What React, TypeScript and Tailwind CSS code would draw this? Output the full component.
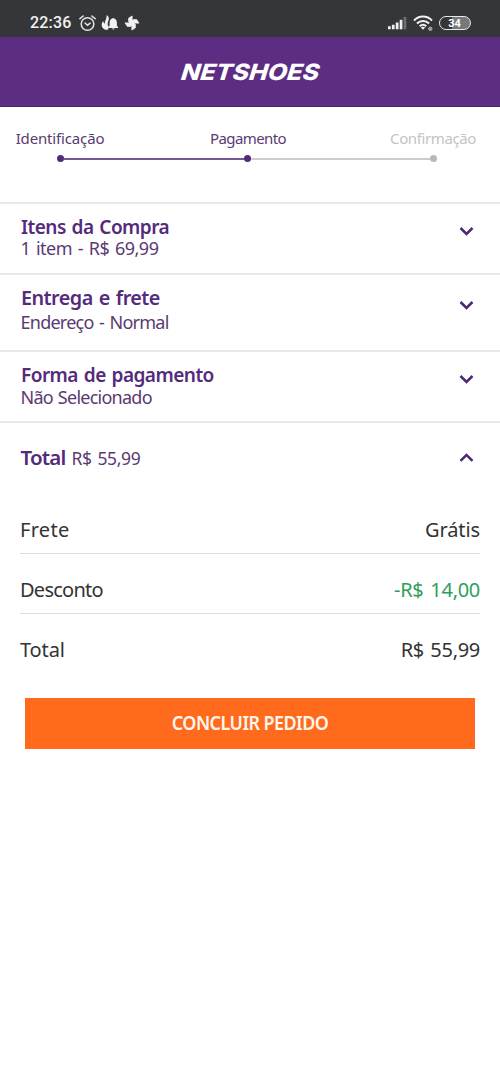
import clsx from "clsx";

type Step = { label: string; className: string };

const steps: Step[] = [
  { label: "Identificação", className: "text-[#5a3a72] tracking-[-0.15px]" },
  { label: "Pagamento", className: "pl-[3px] text-[#5a3a72] tracking-[-0.6px]" },
  { label: "Confirmação", className: "text-[#c4c4c4] tracking-[-0.4px]" },
];

const sections = [
  {
    title: "Itens da Compra",
    detail: "1 item - R$ 69,99",
    row: "h-[71px]",
    titleClass: "scale-x-[0.93] tracking-[-0.6px] [word-spacing:1.5px]",
    detailClass: "tracking-[-0.5px] [word-spacing:1.5px]",
    chevron: "mt-[11px]",
  },
  {
    title: "Entrega e frete",
    detail: "Endereço - Normal",
    row: "h-[77px]",
    titleClass: "scale-x-[0.965] tracking-[-0.55px] [word-spacing:1.5px]",
    detailClass: "mt-[3px] tracking-[-0.75px] [word-spacing:1.5px]",
    chevron: "mt-[14px]",
  },
  {
    title: "Forma de pagamento",
    detail: "Não Selecionado",
    row: "h-[71px]",
    titleClass: "scale-x-[0.93] tracking-[-0.6px] [word-spacing:1.5px]",
    detailClass: "mt-px tracking-[-0.75px] [word-spacing:1px]",
    chevron: "mt-[11px]",
  },
];

const summary = [
  { label: "Frete", value: "Grátis", labelClass: "tracking-[0.3px]", valueClass: "text-[#333] tracking-[-0.1px]" },
  { label: "Desconto", value: "-R$ 14,00", labelClass: "tracking-[-0.75px]", valueClass: "text-[#2f9e5b] tracking-[-0.3px] [word-spacing:2px]" },
  { label: "Total", value: "R$ 55,99", labelClass: "tracking-[-0.1px]", valueClass: "text-[#333] tracking-[-0.3px] [word-spacing:1.5px]" },
];

function Chevron({ up = false, className }: { up?: boolean; className?: string }) {
  return (
    <svg width="16" height="32" viewBox="0 0 16 32" className={clsx("shrink-0", className)} fill="none">
      <path
        d={up ? "M2.5 18.9L8.5 12.9L14.5 18.9" : "M2.5 13L8.5 19L14.5 13"}
        stroke="#4b2a73"
        strokeWidth="2.5"
      />
    </svg>
  );
}

function StatusBar() {
  return (
    <div className="flex h-[37px] items-start justify-between bg-[#353639] pl-[30px] pr-[29px] pt-[13px]">
      <div className="flex h-5 items-center">
        <span className="w-[42px] whitespace-nowrap font-['Roboto',sans-serif] text-base font-medium leading-5 tracking-[0.2px] text-[#f1f1f1]">
          22:36
        </span>
        {/* Alarma */}
        <svg width="18" height="18" viewBox="0 0 18 18" className="ml-[7px]" fill="none" stroke="#e4e4e4" strokeWidth="1.5" strokeLinecap="round">
          <circle cx="8.5" cy="10" r="6.3" />
          <path d="M.9 4.7L4.2 2M16.1 4.7L12.8 2M6.1 9L8.5 11.2L11.2 9.2" />
        </svg>
        {/* Llama y campana */}
        <svg width="18" height="18" viewBox="0 0 18 18" className="ml-[4px]" fill="#f1f1f1">
          <path d="M5.5 1C8.2 2.6 8.4 4.8 7.2 7.2C6.3 9.2 6.4 11.3 7.8 12.7L7 15.7C3.5 16.2 .6 13.9 .7 10.7C.8 9 1.4 8.1 2.2 7.1C2.4 8.5 2.9 9.2 3.9 9.7C3.5 6.8 6 4.8 5.5 1Z" />
          <path d="M12.2 4c-2.5.5-3.6 2.5-3.6 5v2.6L7.2 14h10.2l-1.5-2.4V9c0-2.5-1.1-4.5-3.7-5zM10.8 14.5h2.9c-.3 1.3-2.5 1.3-2.9 0z" />
        </svg>
        {/* Molinillo */}
        <svg width="16" height="16" viewBox="0 0 16 16" className="ml-[5px]" fill="#f1f1f1">
          <path
            d="M8 8V1.300L4.800 3.500V6.500L8 8ZM8 8H14.700L12.500 4.800H9.500L8 8ZM8 8V14.700L11.200 12.500V9.500L8 8ZM8 8H1.300L3.500 11.200H6.500L8 8Z"
            stroke="#f1f1f1"
            strokeWidth="1.1"
            strokeLinejoin="round"
          />
        </svg>
      </div>
      <div className="flex h-5 items-center">
        <svg width="20" height="16" viewBox="0 0 20 16" fill="#f1f1f1">
          <path d="M0 11.3h2.7v3H0zM3.9 9.7h2.7v4.6H3.9zM7.8 7.5h2.7v6.8H7.8z" />
          <path d="M11.7 4.8h2.7v9.5h-2.7z" />
          <path d="M15.600 2h2.700v12.300h-2.700z" fill="#6f7073" />
        </svg>
        <svg width="21" height="18" viewBox="0 0 21 18" className="ml-[5px]" fill="none" stroke="#f1f1f1" strokeWidth="2">
          <path d="M1 6.6C6 1.2 14 1.2 19 6.6M3.9 9.5C7.5 6 12.5 6 16.1 9.5M6.7 12.2C8.8 10.3 11.2 10.3 13.3 12.2" />
          <path d="M7.8 13.5L10 15.8L12.2 13.5Q10 12 7.8 13.5Z" fill="#f1f1f1" stroke="none" />
          <circle cx="17.3" cy="14.8" r="1.7" fill="#8f9093" stroke="#b4b4b4" strokeWidth="1" />
        </svg>
        <div className="ml-[5px] flex h-[14px] w-8 items-center justify-center rounded-full border-[1.5px] border-[#e8e8e8] bg-linear-to-r from-[#353639] from-40% to-[#77787b] to-40% pr-px font-['Roboto',sans-serif] text-[11px] font-bold leading-none text-white">
          34
        </div>
      </div>
    </div>
  );
}

function Stepper() {
  return (
    <div className="h-[95px] pt-[20px]">
      <div className="flex justify-between pr-[7px] text-[15px] leading-[22px]">
        {steps.map((s) => (
          <span key={s.label} className={clsx("w-[120px] text-center whitespace-nowrap", s.className)}>
            {s.label}
          </span>
        ))}
      </div>
      <div className="mt-[6px] flex h-[7px] items-center pl-[57px] pr-[63px]">
        <span className="size-[7px] rounded-full bg-[#512a78]" />
        <span className="h-[2px] flex-1 bg-[#765796]" />
        <span className="size-[7px] rounded-full bg-[#512a78]" />
        <span className="h-[2px] flex-1 bg-[#cccccc]" />
        <span className="size-[7px] rounded-full bg-[#b8b8b8]" />
      </div>
    </div>
  );
}

export default function App() {
  return (
    <div className="min-h-[1082px] w-[500px] bg-white font-['Noto_Sans',sans-serif]">
      <StatusBar />

      <header className="flex h-[70px] items-center justify-center border-b border-[#4a2470] bg-[#5c2d82]">
        <svg width="142" height="24" viewBox="0 0 142 24" className="overflow-visible">
          <text
            x="4"
            y="20"
            textLength="138"
            lengthAdjust="spacingAndGlyphs"
            transform="skewX(-7)"
            className="fill-white font-['Inter',sans-serif] text-[22.5px] font-extrabold italic"
          >
            NETSHOES
          </text>
        </svg>
      </header>

      <Stepper />

      {sections.map((s) => (
        <section key={s.title} className={clsx("flex justify-between border-t-2 border-[#e9e9e9] pl-[20.5px] pr-[26px]", s.row)}>
          <div className="pt-[10px] whitespace-nowrap">
            <h2 className={clsx("origin-left text-[20.5px] font-semibold leading-6 text-[#542b7c]", s.titleClass)}>{s.title}</h2>
            <p className={clsx("text-[18px] leading-[20px] text-[#5a3a72]", s.detailClass)}>{s.detail}</p>
          </div>
          <Chevron className={s.chevron} />
        </section>
      ))}

      <section className="border-t-2 border-[#e9e9e9]">
        <div className="flex h-[71px] justify-between pl-[20.5px] pr-[26px] pt-[18px]">
          <p className="flex h-8 items-baseline gap-[6px] whitespace-nowrap leading-8">
            <span className="text-[20.5px] font-semibold tracking-[-0.8px] text-[#542b7c]">Total</span>
            <span className="text-[17.5px] tracking-[-0.35px] text-[#5a3a72] [word-spacing:1.5px]">R$ 55,99</span>
          </p>
          <Chevron up className="mt-px" />
        </div>

        <dl className="mx-5 divide-y divide-[#dcdcdc]">
          {summary.map((item) => (
            <div key={item.label} className="flex h-[60px] items-end justify-between pb-[8px] text-[20px] leading-[30px] last:pb-[9px]">
              <dt className={clsx("text-[#333]", item.labelClass)}>{item.label}</dt>
              <dd className={item.valueClass}>{item.value}</dd>
            </div>
          ))}
        </dl>
      </section>

      <button className="mx-[25px] mt-[24px] block h-[51px] w-[450px] bg-[#ff6a1c] pb-[2px] text-[19.5px] font-semibold tracking-[-0.6px] text-[#fff6ee]">
        <span className="inline-block scale-x-[0.92]">CONCLUIR PEDIDO</span>
      </button>
    </div>
  );
}
